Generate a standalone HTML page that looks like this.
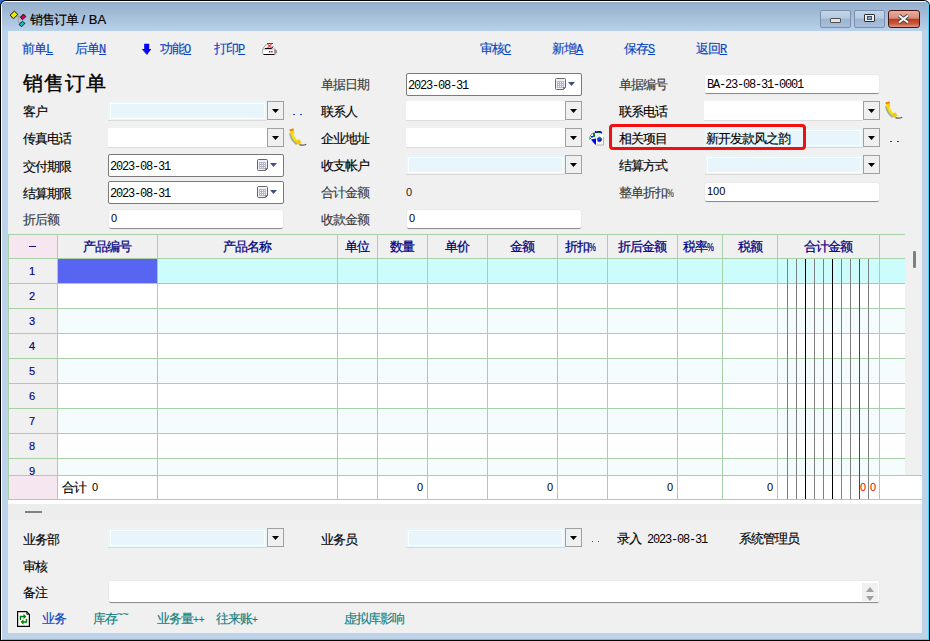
<!DOCTYPE html>
<html><head><meta charset="utf-8"><style>
html,body{margin:0;padding:0;width:930px;height:641px;overflow:hidden;background:#f0f0f0}
.b{position:absolute}
.t,.m,.n{position:absolute;white-space:nowrap;font-family:"Liberation Sans",sans-serif;line-height:14px}
.t{font-size:13px;letter-spacing:-1px;-webkit-text-stroke:0.15px currentColor}
.hd{-webkit-text-stroke:0.25px currentColor}
.m{font-family:"Liberation Mono",monospace;font-size:12px;letter-spacing:-1.2px}
.n{font-size:11px}
.s{font-size:12px;letter-spacing:0}
.pc{font-size:11px;letter-spacing:0;display:inline-block;transform:scaleX(.7);transform-origin:left}
.u{text-decoration:underline;font-family:"Liberation Mono",monospace;font-size:12px;letter-spacing:0}
.wb{border:1px solid #7a90ac;border-radius:2px;background:linear-gradient(#c4d6ea 0%,#b4cae2 45%,#9cb4d2 50%,#a8c0dc 100%)}
</style></head><body>
<div class="b" style="left:0px;top:0px;width:6px;height:6px;background:#2e6ec8"></div>
<div class="b" style="left:924px;top:0px;width:6px;height:6px;background:#f4f4f4"></div>
<div class="b" style="left:0px;top:0px;width:930px;height:641px;background:#000;border-radius:6px 6px 0 0"></div>
<div class="b" style="left:1px;top:1px;width:928px;height:639px;background:#fff;border-radius:5px 5px 0 0"></div>
<div class="b" style="left:2px;top:2px;width:927px;height:638px;background:#40d4f8;border-radius:4px 4px 0 0"></div>
<div class="b" style="left:2px;top:2px;width:926px;height:637px;background:#bcd3ea;border-radius:4px 4px 0 0"></div>
<div class="b" style="left:2px;top:2px;width:926px;height:29px;background:linear-gradient(#93aecb,#b9d1ea);border-radius:4px 4px 0 0"></div>
<div class="b" style="left:8px;top:31px;width:914px;height:602px;background:#f0f0f0"></div>
<svg class="b" style="left:0;top:0" width="30" height="30" viewBox="0 0 30 30">
<path d="M16 16.3 H21 M18.4 16.3 V22.3 H20.5" stroke="#a0a0a0" fill="none" stroke-width="1"/>
<path d="M10.1 15.2 L14.4 11.1 L17.8 14.4 L13.5 18.7 Z" fill="#f0e800" stroke="#101010" stroke-width="1"/>
<path d="M20.4 17.2 L23.4 14 L25.9 16.5 L22.5 19.7 Z" fill="#d00060" stroke="#101010" stroke-width="1"/>
<path d="M19.1 24.4 L22.5 21.4 L24.9 23.4 L21.5 26.8 Z" fill="#00c8c8" stroke="#101010" stroke-width="1"/>
</svg>
<div class="t" style="left:30px;top:13px;color:#000;">销售订单<span class="s" style="font-size:13px"> / BA</span></div>
<div class="b wb" style="left:820px;top:10px;width:29px;height:16px"><div class="b" style="left:9px;top:7px;width:9px;height:3px;border:1px solid #505050;background:#e4e4e4;border-radius:1px"></div></div>
<div class="b wb" style="left:854px;top:10px;width:29px;height:16px"><div class="b" style="left:9px;top:3px;width:9px;height:6px;border:1px solid #303030;background:#eeeeee;border-radius:1px"><div class="b" style="left:2px;top:1px;width:3px;height:2px;border:1px solid #405070;background:#90a8c8"></div></div></div>
<div class="b" style="left:888px;top:10px;width:30px;height:16px;border:1px solid #4a1414;border-radius:3px;background:linear-gradient(#eab0a0 0%,#d88a78 45%,#b83c20 52%,#c85a3c 80%,#e49888 100%)"><svg class="b" style="left:8px;top:3px" width="13" height="10" viewBox="0 0 13 10"><path d="M2 1.5 L11 8.5 M11 1.5 L2 8.5" stroke="#40404c" stroke-width="3.6"/><path d="M2 1.5 L11 8.5 M11 1.5 L2 8.5" stroke="#fafafa" stroke-width="2"/></svg></div>
<div class="t" style="left:22px;top:42px;color:#0a44c0;">前单<span class="u">L</span></div>
<div class="t" style="left:75px;top:42px;color:#0a44c0;">后单<span class="u">N</span></div>
<svg class="b" style="left:141px;top:43px" width="13" height="13" viewBox="0 0 13 13"><path d="M3.2 0.8 H8.2 V6 H10.3 L6 11.8 L1 6 H3.2 Z" fill="#0000f8"/><path d="M1.2 6.2 L6 11.6" stroke="#505028" stroke-width="1"/></svg>
<div class="t" style="left:160px;top:42px;color:#0a44c0;">功能<span class="u">O</span></div>
<div class="t" style="left:214px;top:42px;color:#0a44c0;">打印<span class="u">P</span></div>
<svg class="b" style="left:262px;top:42px" width="16" height="14" viewBox="0 0 16 14">
<path d="M1 7 H12.5 L14.5 8.5 V11 L12.5 12.5 H2 L0.5 11 V8 Z" fill="#fff" stroke="#a8a8a8" stroke-width="1"/>
<path d="M12 7 L14.5 8.5 V11 L12.5 12.5 Z" fill="#888"/>
<path d="M1.5 12.5 H12.5" stroke="#000" stroke-width="1"/>
<path d="M5 1.5 H11" stroke="#505050" stroke-width="1"/>
<path d="M4.5 2 L0.8 6.5" stroke="#a0a0a0" stroke-width="1"/>
<path d="M5.5 2 L9.5 6 M9.5 2 L5.5 6" stroke="#f00000" stroke-width="1"/>
<path d="M3 6.5 H9.5 L11 4.5" stroke="#000" fill="none" stroke-width="1"/>
<rect x="7" y="9" width="1.5" height="1.5" fill="#f00000"/><rect x="9.2" y="9" width="1.5" height="1.5" fill="#f00000"/>
</svg>
<div class="t" style="left:480px;top:42px;color:#0a44c0;">审核<span class="u">C</span></div>
<div class="t" style="left:552px;top:42px;color:#0a44c0;">新增<span class="u">A</span></div>
<div class="t" style="left:624px;top:42px;color:#0a44c0;">保存<span class="u">S</span></div>
<div class="t" style="left:696px;top:42px;color:#0a44c0;">返回<span class="u">R</span></div>
<div class="b" style="left:23px;top:71px;font-size:20px;line-height:24px;font-weight:400;-webkit-text-stroke:0.4px #000;font-family:'Liberation Serif',serif;color:#000;letter-spacing:1px;white-space:nowrap">销售订单</div>
<div class="t" style="left:23px;top:105px;color:#000;">客户</div>
<div class="t" style="left:23px;top:132px;color:#000;">传真电话</div>
<div class="t" style="left:23px;top:160px;color:#000;">交付期限</div>
<div class="t" style="left:23px;top:187px;color:#000;">结算期限</div>
<div class="t" style="left:23px;top:213px;color:#3a3a3a;">折后额</div>
<div class="b" style="left:108px;top:101px;width:159px;height:20px;background:#e6f6fb;border-bottom:1px solid #dadada;box-sizing:border-box"></div>
<div class="b" style="left:110px;top:103px;width:155px;height:16px;background:#e8f6fb;border:1px solid #fff;box-sizing:border-box"></div>
<div class="b" style="left:267px;top:101px;width:17px;height:19px;box-sizing:border-box;border:1px solid #a0a0a0;background:#f0f0f0"><svg class="b" style="left:0;top:0" width="15" height="17"><path d="M4 7 H11 L7.5 11 Z" fill="#000"/></svg></div>
<div class="b" style="left:293px;top:114px;width:2px;height:1px;background:#1a48c0"></div>
<div class="b" style="left:300px;top:114px;width:2px;height:1px;background:#1a48c0"></div>
<div class="b" style="left:108px;top:128px;width:159px;height:20px;background:#fff;border-bottom:1px solid #dcdcdc;box-sizing:border-box"></div>
<div class="b" style="left:267px;top:128px;width:17px;height:19px;box-sizing:border-box;border:1px solid #a0a0a0;background:#f0f0f0"><svg class="b" style="left:0;top:0" width="15" height="17"><path d="M4 7 H11 L7.5 11 Z" fill="#000"/></svg></div>
<svg class="b" style="left:284px;top:124px" width="24" height="24" viewBox="0 0 24 24">
<path d="M6.4 9 Q7.4 15.5 12.9 19.8" stroke="#708060" stroke-width="2.8" fill="none" opacity=".6"/>
<path d="M7.8 8 Q8.8 14.5 14 18.4" stroke="#f8e010" stroke-width="2.6" fill="none"/>
<path d="M5.5 5.5 L9.5 4.5 L10.5 9.5 L6.5 10.5 Z" fill="#f8d810"/>
<path d="M5.5 5.5 L9.5 4.5 L9.9 6.3 L5.9 7.3 Z" fill="#f07818"/>
<path d="M12 17.5 L15.5 15.2 L17.5 18.8 L14 21 Z" fill="#f0c810"/>
<path d="M15.5 20.6 Q19 22 22.2 20.2" stroke="#585858" stroke-width="1.3" fill="none"/>
</svg>
<div class="b" style="left:108px;top:154px;width:176px;height:23px;box-sizing:border-box;border:1px solid #7a7a7a;border-radius:2px;background:#fff"></div>
<div class="m" style="left:110px;top:160px;color:#000;">2023-08-31</div>
<svg class="b" style="left:257px;top:159px" width="22" height="13" viewBox="0 0 22 13">
<path d="M1.5 0.5 H9.5 Q10.5 0.5 10.5 1.5 V9.5 L8.5 11.5 H1.5 Q0.5 11.5 0.5 10.5 V1.5 Q0.5 0.5 1.5 0.5 Z" fill="#eef2f8" stroke="#6c6464" stroke-width="1"/>
<rect x="2" y="3" width="7" height="7" fill="#b4b8c4"/>
<path d="M3 4h1v1h-1zM5 4h1v1h-1zM7 4h1v1h-1zM3 6h1v1h-1zM5 6h1v1h-1zM7 6h1v1h-1zM3 8h1v1h-1zM5 8h1v1h-1zM7 8h1v1h-1z" fill="#f4f4f8"/>
<path d="M8.5 11.5 L8.5 9.5 L10.5 9.5" fill="none" stroke="#6c6464" stroke-width="0.8"/>
<path d="M13 4 H20 L16.5 8 Z" fill="#405080"/>
</svg>
<div class="b" style="left:108px;top:181px;width:176px;height:23px;box-sizing:border-box;border:1px solid #7a7a7a;border-radius:2px;background:#fff"></div>
<div class="m" style="left:110px;top:187px;color:#000;">2023-08-31</div>
<svg class="b" style="left:257px;top:186px" width="22" height="13" viewBox="0 0 22 13">
<path d="M1.5 0.5 H9.5 Q10.5 0.5 10.5 1.5 V9.5 L8.5 11.5 H1.5 Q0.5 11.5 0.5 10.5 V1.5 Q0.5 0.5 1.5 0.5 Z" fill="#eef2f8" stroke="#6c6464" stroke-width="1"/>
<rect x="2" y="3" width="7" height="7" fill="#b4b8c4"/>
<path d="M3 4h1v1h-1zM5 4h1v1h-1zM7 4h1v1h-1zM3 6h1v1h-1zM5 6h1v1h-1zM7 6h1v1h-1zM3 8h1v1h-1zM5 8h1v1h-1zM7 8h1v1h-1z" fill="#f4f4f8"/>
<path d="M8.5 11.5 L8.5 9.5 L10.5 9.5" fill="none" stroke="#6c6464" stroke-width="0.8"/>
<path d="M13 4 H20 L16.5 8 Z" fill="#405080"/>
</svg>
<div class="b" style="left:109px;top:210px;width:174px;height:19px;background:#fff;border-bottom:1px solid #8c8c8c;border-radius:2px;box-sizing:border-box;box-shadow:0 0 0 0.5px #e4e4e4"></div>
<div class="n" style="left:111px;top:211px;color:#000;">0</div>
<div class="t" style="left:321px;top:78px;color:#3a3a3a;">单据日期</div>
<div class="t" style="left:321px;top:105px;color:#000;">联系人</div>
<div class="t" style="left:321px;top:132px;color:#000;">企业地址</div>
<div class="t" style="left:321px;top:159px;color:#000;">收支帐户</div>
<div class="t" style="left:321px;top:186px;color:#3a3a3a;">合计金额</div>
<div class="t" style="left:321px;top:213px;color:#3a3a3a;">收款金额</div>
<div class="b" style="left:406px;top:73px;width:176px;height:23px;box-sizing:border-box;border:1px solid #7a7a7a;border-radius:2px;background:#fff"></div>
<div class="m" style="left:408px;top:79px;color:#000;">2023-08-31</div>
<svg class="b" style="left:555px;top:78px" width="22" height="13" viewBox="0 0 22 13">
<path d="M1.5 0.5 H9.5 Q10.5 0.5 10.5 1.5 V9.5 L8.5 11.5 H1.5 Q0.5 11.5 0.5 10.5 V1.5 Q0.5 0.5 1.5 0.5 Z" fill="#eef2f8" stroke="#6c6464" stroke-width="1"/>
<rect x="2" y="3" width="7" height="7" fill="#b4b8c4"/>
<path d="M3 4h1v1h-1zM5 4h1v1h-1zM7 4h1v1h-1zM3 6h1v1h-1zM5 6h1v1h-1zM7 6h1v1h-1zM3 8h1v1h-1zM5 8h1v1h-1zM7 8h1v1h-1z" fill="#f4f4f8"/>
<path d="M8.5 11.5 L8.5 9.5 L10.5 9.5" fill="none" stroke="#6c6464" stroke-width="0.8"/>
<path d="M13 4 H20 L16.5 8 Z" fill="#405080"/>
</svg>
<div class="b" style="left:406px;top:101px;width:159px;height:20px;background:#fff;border-bottom:1px solid #dcdcdc;box-sizing:border-box"></div>
<div class="b" style="left:565px;top:101px;width:17px;height:19px;box-sizing:border-box;border:1px solid #a0a0a0;background:#f0f0f0"><svg class="b" style="left:0;top:0" width="15" height="17"><path d="M4 7 H11 L7.5 11 Z" fill="#000"/></svg></div>
<div class="b" style="left:406px;top:128px;width:159px;height:20px;background:#fff;border-bottom:1px solid #dcdcdc;box-sizing:border-box"></div>
<div class="b" style="left:565px;top:128px;width:17px;height:19px;box-sizing:border-box;border:1px solid #a0a0a0;background:#f0f0f0"><svg class="b" style="left:0;top:0" width="15" height="17"><path d="M4 7 H11 L7.5 11 Z" fill="#000"/></svg></div>
<svg class="b" style="left:585px;top:126px" width="22" height="22" viewBox="0 0 22 22">
<path d="M4.5 13.5 A7.5 7.5 0 0 1 18 9" stroke="#8c8c8c" stroke-width="1" fill="none"/>
<path d="M10 5 H16 L17.5 7 H10 Z" fill="#0018f0"/>
<rect x="11" y="5" width="1" height="1" fill="#108010"/><rect x="13" y="6" width="1" height="1" fill="#108010"/>
<rect x="8" y="7" width="2" height="4" fill="#108010"/><rect x="6" y="10" width="2" height="1.5" fill="#0018f0"/>
<rect x="5" y="12" width="1" height="1" fill="#108080"/>
<path d="M6 13.5 L11 12.5 V18.5 H10 Z" fill="#0000f0"/>
<rect x="11" y="8" width="7" height="10.5" fill="#fff"/>
<path d="M18.5 11 V19 H11" stroke="#b4b4b4" stroke-width="1" fill="none"/>
<path d="M12 9h1v1h-1zM14 8h1v1h-1zM14 10h1v1h-1zM12 17h1v1h-1zM16 17h1v1h-1zM14 16h1v1h-1zM12 15h1v1h-1z" fill="#f8f000"/>
<circle cx="14.5" cy="13.5" r="2.2" fill="#0010e0" stroke="#108080" stroke-width="0.8"/>
<path d="M13.5 14 L15.5 12" stroke="#30a030" stroke-width="1"/>
</svg>
<div class="b" style="left:406px;top:155px;width:159px;height:20px;background:#e6f6fb;border-bottom:1px solid #dadada;box-sizing:border-box"></div>
<div class="b" style="left:408px;top:157px;width:155px;height:16px;background:#e8f6fb;border:1px solid #fff;box-sizing:border-box"></div>
<div class="b" style="left:565px;top:155px;width:17px;height:19px;box-sizing:border-box;border:1px solid #a0a0a0;background:#f0f0f0"><svg class="b" style="left:0;top:0" width="15" height="17"><path d="M4 7 H11 L7.5 11 Z" fill="#000"/></svg></div>
<div class="n" style="left:406px;top:185px;color:#202020;">0</div>
<div class="b" style="left:407px;top:210px;width:174px;height:19px;background:#fff;border-bottom:1px solid #8c8c8c;border-radius:2px;box-sizing:border-box;box-shadow:0 0 0 0.5px #e4e4e4"></div>
<div class="n" style="left:409px;top:211px;color:#000;">0</div>
<div class="t" style="left:619px;top:78px;color:#3a3a3a;">单据编号</div>
<div class="t" style="left:619px;top:105px;color:#000;">联系电话</div>
<div class="t" style="left:619px;top:132px;color:#000;">相关项目</div>
<div class="t" style="left:619px;top:159px;color:#000;">结算方式</div>
<div class="t" style="left:619px;top:186px;color:#3a3a3a;">整单折扣<span class="pc">%</span></div>
<div class="b" style="left:705px;top:75px;width:174px;height:19px;background:#fff;border-bottom:1px solid #8c8c8c;border-radius:2px;box-sizing:border-box;box-shadow:0 0 0 0.5px #e4e4e4"></div>
<div class="m" style="left:707px;top:78px;color:#000;">BA-23-08-31-0001</div>
<div class="b" style="left:704px;top:101px;width:159px;height:20px;background:#fff;border-bottom:1px solid #dcdcdc;box-sizing:border-box"></div>
<div class="b" style="left:863px;top:101px;width:17px;height:19px;box-sizing:border-box;border:1px solid #a0a0a0;background:#f0f0f0"><svg class="b" style="left:0;top:0" width="15" height="17"><path d="M4 7 H11 L7.5 11 Z" fill="#000"/></svg></div>
<svg class="b" style="left:880px;top:97px" width="24" height="24" viewBox="0 0 24 24">
<path d="M6.4 9 Q7.4 15.5 12.9 19.8" stroke="#708060" stroke-width="2.8" fill="none" opacity=".6"/>
<path d="M7.8 8 Q8.8 14.5 14 18.4" stroke="#f8e010" stroke-width="2.6" fill="none"/>
<path d="M5.5 5.5 L9.5 4.5 L10.5 9.5 L6.5 10.5 Z" fill="#f8d810"/>
<path d="M5.5 5.5 L9.5 4.5 L9.9 6.3 L5.9 7.3 Z" fill="#f07818"/>
<path d="M12 17.5 L15.5 15.2 L17.5 18.8 L14 21 Z" fill="#f0c810"/>
<path d="M15.5 20.6 Q19 22 22.2 20.2" stroke="#585858" stroke-width="1.3" fill="none"/>
</svg>
<div class="b" style="left:704px;top:128px;width:159px;height:20px;background:#e6f6fb;border-bottom:1px solid #dadada;box-sizing:border-box"></div>
<div class="b" style="left:706px;top:130px;width:155px;height:16px;background:#e8f6fb;border:1px solid #fff;box-sizing:border-box"></div>
<div class="b" style="left:863px;top:128px;width:17px;height:19px;box-sizing:border-box;border:1px solid #a0a0a0;background:#f0f0f0"><svg class="b" style="left:0;top:0" width="15" height="17"><path d="M4 7 H11 L7.5 11 Z" fill="#000"/></svg></div>
<div class="b" style="left:890px;top:141px;width:2px;height:1px;background:#1a48c0"></div>
<div class="b" style="left:897px;top:141px;width:2px;height:1px;background:#1a48c0"></div>
<div class="t" style="left:706px;top:132px;color:#000;">新开发款风之韵</div>
<div class="b" style="left:609px;top:124px;width:197px;height:26px;border:3px solid #f01010;border-radius:4px;box-sizing:border-box"></div>
<div class="b" style="left:705px;top:155px;width:158px;height:20px;background:#e6f6fb;border-bottom:1px solid #dadada;box-sizing:border-box"></div>
<div class="b" style="left:707px;top:157px;width:154px;height:16px;background:#e8f6fb;border:1px solid #fff;box-sizing:border-box"></div>
<div class="b" style="left:863px;top:155px;width:17px;height:19px;box-sizing:border-box;border:1px solid #a0a0a0;background:#f0f0f0"><svg class="b" style="left:0;top:0" width="15" height="17"><path d="M4 7 H11 L7.5 11 Z" fill="#000"/></svg></div>
<div class="b" style="left:705px;top:183px;width:174px;height:19px;background:#fff;border-bottom:1px solid #8c8c8c;border-radius:2px;box-sizing:border-box;box-shadow:0 0 0 0.5px #e4e4e4"></div>
<div class="n" style="left:707px;top:184px;color:#000;">100</div>
<div class="b" style="left:8px;top:234px;width:897px;height:25px;background:#f0f0f0"></div>
<div class="b" style="left:9px;top:235px;width:48px;height:23px;background:#f5e6ef"></div>
<div class="b" style="left:57px;top:259px;width:848px;height:24px;background:#ccfcfc"></div>
<div class="b" style="left:9px;top:259px;width:48px;height:24px;background:#f0f0f0"></div>
<div class="n" style="left:28px;top:264px;color:#000080;width:8px;text-align:center;-webkit-text-stroke:0.15px #000080;">1</div>
<div class="b" style="left:57px;top:284px;width:848px;height:24px;background:#ffffff"></div>
<div class="b" style="left:9px;top:284px;width:48px;height:24px;background:#f0f0f0"></div>
<div class="n" style="left:28px;top:289px;color:#000080;width:8px;text-align:center;-webkit-text-stroke:0.15px #000080;">2</div>
<div class="b" style="left:57px;top:309px;width:848px;height:24px;background:#f4fcfe"></div>
<div class="b" style="left:9px;top:309px;width:48px;height:24px;background:#f0f0f0"></div>
<div class="n" style="left:28px;top:314px;color:#000080;width:8px;text-align:center;-webkit-text-stroke:0.15px #000080;">3</div>
<div class="b" style="left:57px;top:334px;width:848px;height:24px;background:#ffffff"></div>
<div class="b" style="left:9px;top:334px;width:48px;height:24px;background:#f0f0f0"></div>
<div class="n" style="left:28px;top:339px;color:#000080;width:8px;text-align:center;-webkit-text-stroke:0.15px #000080;">4</div>
<div class="b" style="left:57px;top:359px;width:848px;height:24px;background:#f4fcfe"></div>
<div class="b" style="left:9px;top:359px;width:48px;height:24px;background:#f0f0f0"></div>
<div class="n" style="left:28px;top:364px;color:#000080;width:8px;text-align:center;-webkit-text-stroke:0.15px #000080;">5</div>
<div class="b" style="left:57px;top:384px;width:848px;height:24px;background:#ffffff"></div>
<div class="b" style="left:9px;top:384px;width:48px;height:24px;background:#f0f0f0"></div>
<div class="n" style="left:28px;top:389px;color:#000080;width:8px;text-align:center;-webkit-text-stroke:0.15px #000080;">6</div>
<div class="b" style="left:57px;top:409px;width:848px;height:24px;background:#f4fcfe"></div>
<div class="b" style="left:9px;top:409px;width:48px;height:24px;background:#f0f0f0"></div>
<div class="n" style="left:28px;top:414px;color:#000080;width:8px;text-align:center;-webkit-text-stroke:0.15px #000080;">7</div>
<div class="b" style="left:57px;top:434px;width:848px;height:24px;background:#ffffff"></div>
<div class="b" style="left:9px;top:434px;width:48px;height:24px;background:#f0f0f0"></div>
<div class="n" style="left:28px;top:439px;color:#000080;width:8px;text-align:center;-webkit-text-stroke:0.15px #000080;">8</div>
<div class="b" style="left:57px;top:459px;width:848px;height:16px;background:#f4fcfe"></div>
<div class="b" style="left:9px;top:459px;width:48px;height:16px;background:#f0f0f0"></div>
<div class="n" style="left:28px;top:464px;color:#000080;width:8px;text-align:center;-webkit-text-stroke:0.15px #000080;">9</div>
<div class="b" style="left:58px;top:259px;width:99px;height:24px;background:#5865f0"></div>
<div class="b" style="left:8px;top:475px;width:914px;height:25px;background:#fff"></div>
<div class="b" style="left:9px;top:476px;width:48px;height:23px;background:#f5e6ef"></div>
<div class="b" style="left:8px;top:500px;width:914px;height:4px;background:#fff"></div>
<div class="b" style="left:8px;top:504px;width:914px;height:16px;background:#ededed"></div>
<div class="b" style="left:8px;top:234px;width:897px;height:1px;background:#a8d0a8"></div>
<div class="b" style="left:8px;top:258px;width:897px;height:1px;background:#a8d0a8"></div>
<div class="b" style="left:8px;top:283px;width:897px;height:1px;background:#a8d0a8"></div>
<div class="b" style="left:8px;top:308px;width:897px;height:1px;background:#a8d0a8"></div>
<div class="b" style="left:8px;top:333px;width:897px;height:1px;background:#a8d0a8"></div>
<div class="b" style="left:8px;top:358px;width:897px;height:1px;background:#a8d0a8"></div>
<div class="b" style="left:8px;top:383px;width:897px;height:1px;background:#a8d0a8"></div>
<div class="b" style="left:8px;top:408px;width:897px;height:1px;background:#a8d0a8"></div>
<div class="b" style="left:8px;top:433px;width:897px;height:1px;background:#a8d0a8"></div>
<div class="b" style="left:8px;top:458px;width:897px;height:1px;background:#a8d0a8"></div>
<div class="b" style="left:8px;top:475px;width:914px;height:1px;background:#a8d0a8"></div>
<div class="b" style="left:8px;top:499px;width:914px;height:1px;background:#a8d0a8"></div>
<div class="b" style="left:8px;top:234px;width:1px;height:266px;background:#a8d0a8"></div>
<div class="b" style="left:57px;top:234px;width:1px;height:266px;background:#a8d0a8"></div>
<div class="b" style="left:157px;top:234px;width:1px;height:266px;background:#a8d0a8"></div>
<div class="b" style="left:337px;top:234px;width:1px;height:266px;background:#a8d0a8"></div>
<div class="b" style="left:377px;top:234px;width:1px;height:266px;background:#a8d0a8"></div>
<div class="b" style="left:427px;top:234px;width:1px;height:266px;background:#a8d0a8"></div>
<div class="b" style="left:487px;top:234px;width:1px;height:266px;background:#a8d0a8"></div>
<div class="b" style="left:557px;top:234px;width:1px;height:266px;background:#a8d0a8"></div>
<div class="b" style="left:607px;top:234px;width:1px;height:266px;background:#a8d0a8"></div>
<div class="b" style="left:677px;top:234px;width:1px;height:266px;background:#a8d0a8"></div>
<div class="b" style="left:722px;top:234px;width:1px;height:266px;background:#a8d0a8"></div>
<div class="b" style="left:777px;top:234px;width:1px;height:266px;background:#a8d0a8"></div>
<div class="b" style="left:879px;top:234px;width:1px;height:266px;background:#a8d0a8"></div>
<div class="b" style="left:787px;top:259px;width:1px;height:240px;background:#808080"></div>
<div class="b" style="left:796px;top:259px;width:1px;height:240px;background:#808080"></div>
<div class="b" style="left:805px;top:259px;width:1px;height:240px;background:#000"></div>
<div class="b" style="left:814px;top:259px;width:1px;height:240px;background:#808080"></div>
<div class="b" style="left:823px;top:259px;width:1px;height:240px;background:#808080"></div>
<div class="b" style="left:832px;top:259px;width:1px;height:240px;background:#000"></div>
<div class="b" style="left:841px;top:259px;width:1px;height:240px;background:#808080"></div>
<div class="b" style="left:850px;top:259px;width:1px;height:240px;background:#808080"></div>
<div class="b" style="left:859px;top:259px;width:1px;height:240px;background:#f00000"></div>
<div class="b" style="left:868px;top:259px;width:1px;height:240px;background:#808080"></div>
<div class="t hd" style="left:57px;top:240px;color:#000080;width:100px;text-align:center;">产品编号</div>
<div class="t hd" style="left:157px;top:240px;color:#000080;width:180px;text-align:center;">产品名称</div>
<div class="t hd" style="left:337px;top:240px;color:#000080;width:40px;text-align:center;">单位</div>
<div class="t hd" style="left:377px;top:240px;color:#000080;width:50px;text-align:center;">数量</div>
<div class="t hd" style="left:427px;top:240px;color:#000080;width:60px;text-align:center;">单价</div>
<div class="t hd" style="left:487px;top:240px;color:#000080;width:70px;text-align:center;">金额</div>
<div class="t hd" style="left:557px;top:240px;color:#000080;width:50px;text-align:center;">折扣<span class="pc">%</span></div>
<div class="t hd" style="left:607px;top:240px;color:#000080;width:70px;text-align:center;">折后金额</div>
<div class="t hd" style="left:677px;top:240px;color:#000080;width:45px;text-align:center;">税率<span class="pc">%</span></div>
<div class="t hd" style="left:722px;top:240px;color:#000080;width:55px;text-align:center;">税额</div>
<div class="t hd" style="left:777px;top:240px;color:#000080;width:102px;text-align:center;">合计金额</div>
<div class="b" style="left:29px;top:246px;width:7px;height:1px;background:#101080"></div>
<div class="t" style="left:62px;top:481px;color:#000;">合计</div>
<div class="n" style="left:92px;top:480px;color:#000;">0</div>
<div class="n" style="left:393px;top:480px;color:#000;width:30px;text-align:right;">0</div>
<div class="n" style="left:523px;top:480px;color:#000;width:30px;text-align:right;">0</div>
<div class="n" style="left:643px;top:480px;color:#000;width:30px;text-align:right;">0</div>
<div class="n" style="left:743px;top:480px;color:#000;width:30px;text-align:right;">0</div>
<div class="n" style="left:860px;top:480px;color:#f00000;">0</div>
<div class="n" style="left:870px;top:480px;color:#f00000;">0</div>
<div class="b" style="left:913px;top:251px;width:3px;height:17px;background:#808080;border-radius:1px"></div>
<div class="b" style="left:25px;top:511px;width:17px;height:2px;background:#808080"></div>
<div class="t" style="left:23px;top:533px;color:#000;">业务部</div>
<div class="b" style="left:108px;top:528px;width:159px;height:20px;background:#e6f6fb;border-bottom:1px solid #dadada;box-sizing:border-box"></div>
<div class="b" style="left:110px;top:530px;width:155px;height:16px;background:#e8f6fb;border:1px solid #fff;box-sizing:border-box"></div>
<div class="b" style="left:267px;top:528px;width:17px;height:19px;box-sizing:border-box;border:1px solid #a0a0a0;background:#f0f0f0"><svg class="b" style="left:0;top:0" width="15" height="17"><path d="M4 7 H11 L7.5 11 Z" fill="#000"/></svg></div>
<div class="t" style="left:321px;top:533px;color:#000;">业务员</div>
<div class="b" style="left:406px;top:528px;width:159px;height:20px;background:#e6f6fb;border-bottom:1px solid #dadada;box-sizing:border-box"></div>
<div class="b" style="left:408px;top:530px;width:155px;height:16px;background:#e8f6fb;border:1px solid #fff;box-sizing:border-box"></div>
<div class="b" style="left:565px;top:528px;width:17px;height:19px;box-sizing:border-box;border:1px solid #a0a0a0;background:#f0f0f0"><svg class="b" style="left:0;top:0" width="15" height="17"><path d="M4 7 H11 L7.5 11 Z" fill="#000"/></svg></div>
<div class="b" style="left:592px;top:541px;width:1px;height:1px;background:#2058d0"></div>
<div class="b" style="left:598px;top:541px;width:1px;height:1px;background:#2058d0"></div>
<div class="t" style="left:617px;top:532px;color:#000;">录入</div>
<div class="m" style="left:647px;top:533px;color:#000;">2023-08-31</div>
<div class="t" style="left:739px;top:532px;color:#000;">系统管理员</div>
<div class="t" style="left:23px;top:560px;color:#000;">审核</div>
<div class="t" style="left:23px;top:586px;color:#000;">备注</div>
<div class="b" style="left:109px;top:581px;width:770px;height:22px;background:#fff;border-bottom:1px solid #8c8c8c;border-radius:2px;box-sizing:border-box;box-shadow:0 0 0 0.5px #e4e4e4"></div>
<div class="b" style="left:862px;top:583px;width:16px;height:18px;background:#f0f0f0"></div>
<div class="b" style="left:866px;top:587px;width:0;height:0;border-left:4px solid transparent;border-right:4px solid transparent;border-bottom:5px solid #a0a0a0"></div>
<div class="b" style="left:866px;top:596px;width:0;height:0;border-left:4px solid transparent;border-right:4px solid transparent;border-top:5px solid #a0a0a0"></div>
<svg class="b" style="left:17px;top:610px" width="14" height="18" viewBox="0 0 14 18">
<path d="M0.6 1.6 H9.6 L12.4 4.4 V16.4 H0.6 Z" fill="#fff" stroke="#000" stroke-width="1.2"/>
<path d="M9.8 2.2 V4.3 H11.8" stroke="#000" fill="none" stroke-width="0.9"/>
<path d="M3.5 10 V6.5 H7" stroke="#008000" stroke-width="1.4" fill="none"/>
<path d="M6.5 3.8 L9.3 6.5 L6.5 9.2 Z" fill="#008000"/>
<path d="M9.5 9 V12 H6" stroke="#008000" stroke-width="1.4" fill="none"/>
<path d="M6.5 9.3 L3.7 12 L6.5 14.7 Z" fill="#008000"/>
</svg>
<div class="t" style="left:42px;top:612px;color:#0a44c0;">业务</div>
<div class="t" style="left:93px;top:612px;color:#108080;">库存<span class="s" style="font-size:10px;position:relative;top:-5px">~~</span></div>
<div class="t" style="left:157px;top:612px;color:#108080;">业务量<span class="s" style="font-size:10px">++</span></div>
<div class="t" style="left:216px;top:612px;color:#108080;">往来账<span class="s" style="font-size:10px">+</span></div>
<div class="t" style="left:344px;top:612px;color:#108080;">虚拟库影响</div>
</body></html>
